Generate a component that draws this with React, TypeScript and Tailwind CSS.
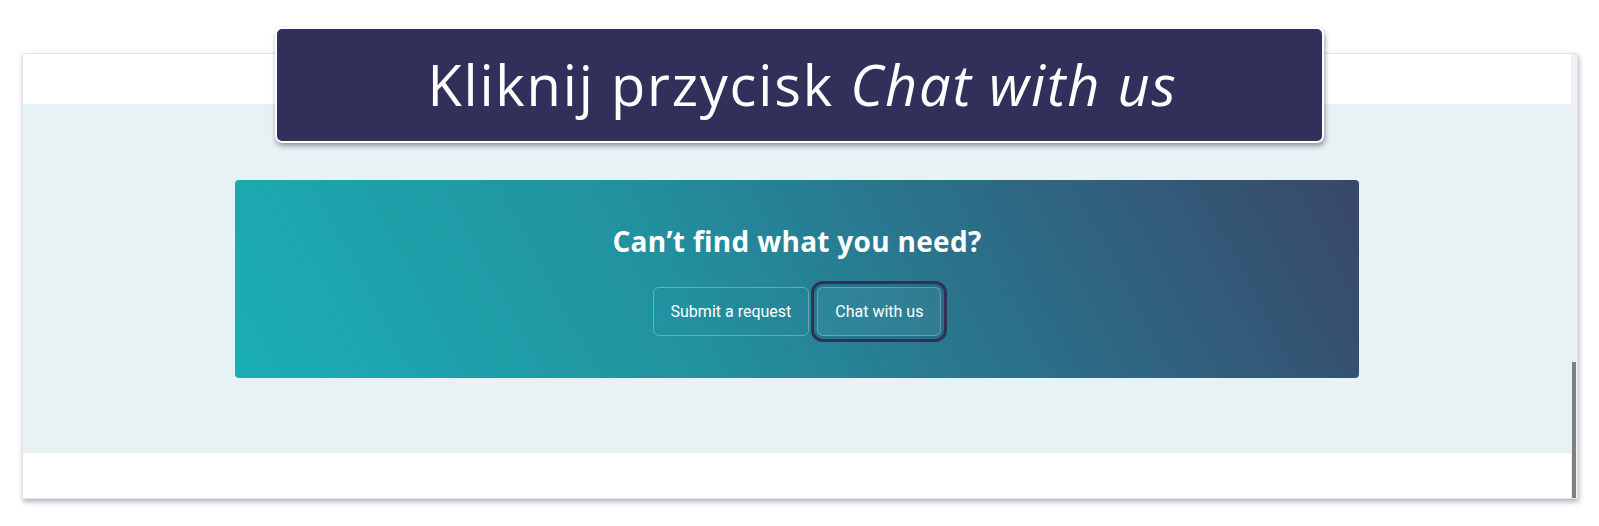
import React from "react";

export default function App() {
  return (
    <div className="relative w-[1599px] h-[526px] bg-white overflow-hidden" style={{ fontFamily: "Roboto, 'Liberation Sans', sans-serif" }}>
      <div className="pt-[53px] pl-[22px]">
        <div className="flex w-[1556px] h-[446px] border border-[#e4e4ea] bg-white shadow-[1px_3px_5px_rgba(90,90,120,0.45)]">
          <div className="flex flex-col flex-1">
            <div className="h-[50px] bg-white" />
            <div className="h-[349px] bg-[#e7f2f4] pt-[76px]">
              <div className="mx-auto w-[1124px] h-[198px] rounded-[4px] bg-[linear-gradient(62deg,#1aafb3_0%,#22909f_40%,#2d6a85_70%,#394769_100%)] flex flex-col items-center pt-[43px]">
                <h2 className="text-white font-bold text-[28px] leading-[36px] tracking-[0.3px]" style={{ fontFamily: "'Open Sans', 'Noto Sans', sans-serif" }}>
                  Can’t find what you need?
                </h2>
                <div className="flex items-center gap-[8px] mt-[28px]">
                  <button className="h-[49px] px-[17px] rounded-[6px] border border-white/30 text-white text-[16px]">
                    Submit a request
                  </button>
                  <button className="h-[49px] px-[17px] rounded-[6px] border border-white/25 bg-white/[0.04] text-white text-[16px] outline-[3px] outline-solid outline-offset-[3px] outline-[#2f3159] shadow-[0_0_0_6px_rgba(30,30,70,0.12)]">
                    Chat with us
                  </button>
                </div>
              </div>
            </div>
            <div className="flex-1 bg-white" />
          </div>
          <div className="w-[6px] bg-[#f0f0f2] relative">
            <div className="absolute left-[1px] top-[308px] w-[4px] h-[136px] bg-[#808080]" />
          </div>
        </div>
      </div>
      <div className="absolute left-[275px] top-[27px] w-[1049px] h-[116px] rounded-[7px] border-2 border-white bg-[#30305a] shadow-[1px_3px_5px_rgba(60,60,90,0.5)] flex items-center justify-center">
        <span className="text-white text-[56px] leading-none pb-[2px] pl-[6px] tracking-[1.8px]" style={{ fontFamily: "'Open Sans', 'Noto Sans', sans-serif" }}>
          Kliknij przycisk <span className="italic">Chat with us</span>
        </span>
      </div>
    </div>
  );
}
